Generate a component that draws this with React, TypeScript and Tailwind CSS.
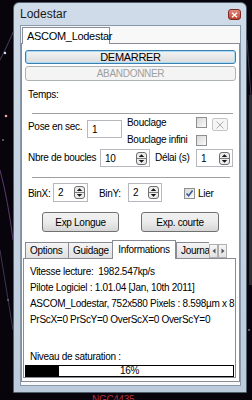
import React from 'react';

const Spin = () => (
	<svg width="11" height="13" viewBox="0 0 11 13" className="shrink-0">
		<rect x="0.5" y="0.5" width="10" height="12" rx="2.5" fill="#ececec" stroke="#6f6f6f" />
		<line x1="1" y1="6.5" x2="10" y2="6.5" stroke="#7a7a7a" />
		<path d="M2.8 5 L5.5 2.3 L8.2 5 Z" fill="#151515" />
		<path d="M2.8 8 L5.5 10.7 L8.2 8 Z" fill="#151515" />
	</svg>
);

const NumBox = ({ value, className }: { value: string; className: string }) => (
	<div
		className={`${className} border border-[#b5b8bd] bg-white flex items-center justify-between pl-[4px] pr-[2px]`}
	>
		<span>{value}</span>
		<Spin />
	</div>
);

const Check = ({ checked, className }: { checked?: boolean; className: string }) => (
	<div
		className={`${className} w-[11px] h-[11px] border border-[#8e8f8f] bg-gradient-to-br from-[#d8d8d8] to-[#fbfbfb] flex items-center justify-center`}
	>
		{checked && (
			<svg width="9" height="9" viewBox="0 0 9 9">
				<path d="M1.5 4.5 L3.6 6.8 L7.6 1.6" fill="none" stroke="#3c5a9a" strokeWidth="1.6" />
			</svg>
		)}
	</div>
);

const Sep = ({ className }: { className: string }) => (
	<div className={`${className} border-t border-[#a0a0a0] border-b border-b-white h-[2px]`} />
);

const Tab = ({ label, w, selected }: { label: string; w: string; selected?: boolean }) =>
	selected ? (
		<div
			className={`${w} h-[19px] -mb-px relative z-10 bg-white border border-b-0 border-[#898c95] flex items-center justify-center pb-[2px]`}
		>
			{label}
		</div>
	) : (
		<div
			className={`${w} h-[16px] border border-b-0 border-r-0 border-[#898c95] bg-gradient-to-b from-[#f4f4f4] to-[#e1e1e1] flex items-center pl-[4px] overflow-hidden`}
		>
			{label}
		</div>
	);

const Arrow = ({ dir }: { dir: 'l' | 'r' }) => (
	<div className="w-[9px] h-[14px] border border-[#b0b0b0] bg-gradient-to-b from-[#f6f6f6] to-[#e3e3e3] flex items-center justify-center">
		<svg width="4" height="6" viewBox="0 0 4 6">
			{dir === 'l' ? <path d="M3.5 0.5 L0.5 3 L3.5 5.5 Z" fill="#555" /> : <path d="M0.5 0.5 L3.5 3 L0.5 5.5 Z" fill="#555" />}
		</svg>
	</div>
);

const App = () => {
	return (
		<div className="w-[252px] h-[400px] bg-[#07050b] relative overflow-hidden font-['Liberation_Sans',Arial,sans-serif] text-[10px] tracking-[-0.3px] leading-[13px] text-black whitespace-nowrap">
			<svg className="absolute inset-0" width="252" height="400" viewBox="0 0 252 400">
				<path d="M0 60 Q10 40 14 30" stroke="#4a3f5a" fill="none" />
				<path d="M0 170 Q8 200 13 240" stroke="#5a3b6e" fill="none" />
				<path d="M0 250 L13 330" stroke="#3e3550" fill="none" />
				<path d="M247 40 L252 110" stroke="#3c3448" fill="none" />
				<circle cx="5" cy="53" r="1.2" fill="#d8e0ff" />
				<circle cx="6" cy="116" r="1.3" fill="#e8a0a0" />
				<circle cx="3" cy="140" r="0.8" fill="#b0b8d0" />
				<circle cx="8" cy="300" r="0.8" fill="#a0a0b8" />
				<circle cx="249" cy="330" r="0.8" fill="#c0c0d0" />
				<rect x="249" y="95" width="3" height="190" fill="#2c2c34" />
			</svg>
			<div className="absolute left-[92px] top-[395px] text-[10px] leading-[10px] text-[#b03040]">
				NGC4435
			</div>

			<div className="relative ml-[13px] mt-[2px] w-[234px] h-[391px] border border-[#52606e] rounded-t-[6px] bg-gradient-to-b from-[#cfdbe8] to-[#bccbdb] flex flex-col pl-[6px] pr-[5px] pb-[6px]">
				<header className="h-[22px] flex items-center justify-between">
					<span className="text-[12px] tracking-normal text-[#1b1b1b] pt-[1px]">Lodestar</span>
					<div className="w-[13px] h-[11px] mt-[1px] rounded-[3px] border border-[#7a2a22] bg-gradient-to-b from-[#e08a7c] to-[#c2402f] flex items-center justify-center">
						<svg width="7" height="6" viewBox="0 0 7 6">
							<path d="M1 0.8 L6 5.2 M6 0.8 L1 5.2" stroke="white" strokeWidth="1.4" />
						</svg>
					</div>
				</header>

				<div className="flex-1 border border-[#8798ab] bg-[#f8f8f8] flex flex-col pb-[3px]">
					<div className="flex items-end h-[17px] pl-[1px]">
						<div className="w-[88px] h-[17px] -mb-px relative z-10 bg-white border border-b-0 border-[#898c95] flex items-center pl-[4px] text-[11px]">
							ASCOM_Lodestar
						</div>
					</div>

					<section className="flex-1 border border-[#898c95] bg-white flex flex-col pb-[3px]">
						<button className="mt-[6px] mx-[3px] h-[14px] rounded-[3px] border border-[#3c7fb1] bg-gradient-to-b from-[#f4f4f4] to-[#dcdcdc] shadow-[inset_0_0_0_1px_#a8dcf4] flex items-center justify-center text-[11px]">
							DEMARRER
						</button>
						<button className="mt-[2px] mx-[3px] h-[15px] rounded-[3px] border border-[#adb2b5] bg-[#f4f4f4] text-[#a0a0a0] flex items-center justify-center">
							ABANDONNER
						</button>
						<p className="mt-[7px] pl-[6px]">Temps:</p>
						<Sep className="mt-[12px] ml-[10px] mr-[6px]" />

						<div className="mt-[1px] h-[32px] flex items-start">
							<span className="ml-[6px] mt-[4px] w-[59px]">Pose en sec.</span>
							<div className="mt-[4px] w-[35px] h-[18px] border border-[#b5b8bd] bg-white flex items-center pl-[4px]">
								1
							</div>
							<div className="ml-[5px] w-[69px] flex flex-col">
								<span>Bouclage</span>
								<span className="mt-[4px]">Bouclage infini</span>
							</div>
							<div className="flex flex-col">
								<Check className="mt-[1px]" />
								<Check className="mt-[7px]" />
							</div>
							<div className="ml-[5px] mt-[2px] w-[16px] h-[13px] rounded-[2px] border border-[#c4c4c4] bg-[#f6f6f6] flex items-center justify-center">
								<svg width="8" height="8" viewBox="0 0 8 8">
									<path d="M0.5 0.5 L7.5 7.5 M7.5 0.5 L0.5 7.5" stroke="#a8a8a8" strokeWidth="0.9" />
								</svg>
							</div>
						</div>

						<div className="h-[19px] flex items-start">
							<span className="ml-[6px] mt-[3px] w-[72px]">Nbre de boucles</span>
							<NumBox value="10" className="mt-[1px] w-[50px] h-[18px]" />
							<span className="ml-[5px] mt-[3px] w-[41px]">Délai (s)</span>
							<NumBox value="1" className="mt-[1px] w-[37px] h-[18px]" />
						</div>

						<Sep className="mt-[10px] ml-[10px] mr-[9px]" />

						<div className="h-[23px] flex items-start">
							<span className="ml-[6px] mt-[8px] w-[25px]">BinX:</span>
							<NumBox value="2" className="mt-[4px] w-[35px] h-[19px]" />
							<span className="ml-[11px] mt-[8px] w-[29px]">BinY:</span>
							<NumBox value="2" className="mt-[4px] w-[34px] h-[19px]" />
							<Check checked className="ml-[22px] mt-[9px]" />
							<span className="ml-[3px] mt-[8px]">Lier</span>
						</div>

						<div className="mt-[10px] flex">
							<button className="ml-[20px] w-[77px] h-[20px] rounded-[3px] border border-[#707070] bg-gradient-to-b from-[#f2f2f2] via-[#ebebeb] to-[#d6d6d6] flex items-center justify-center">
								Exp Longue
							</button>
							<button className="ml-[22px] w-[78px] h-[20px] rounded-[3px] border border-[#707070] bg-gradient-to-b from-[#f2f2f2] via-[#ebebeb] to-[#d6d6d6] flex items-center justify-center">
								Exp. courte
							</button>
						</div>

						<div className="mt-[8px] ml-[1px] mr-[3px] flex-1 flex flex-col">
							<div className="flex items-end h-[18px] pl-[2px]">
								<Tab label="Options" w="w-[43px]" />
								<Tab label="Guidage" w="w-[44px]" />
								<Tab label="Informations" w="w-[64px]" selected />
								<Tab label="Journal" w="w-[33px]" />
								<Arrow dir="l" />
								<Arrow dir="r" />
							</div>
							<div className="flex-1 border border-[#898c95] bg-white flex flex-col pt-[5px] pl-[6px] pr-[1px] leading-[16px] overflow-hidden">
								<p>Vitesse lecture:&nbsp; 1982.547kp/s</p>
								<p>Pilote Logiciel : 1.01.04 [Jan, 10th 2011]</p>
								<p>ASCOM_Lodestar, 752x580 Pixels : 8.598µm x 8.598µm</p>
								<p>PrScX=0 PrScY=0 OverScX=0 OverScY=0</p>
								<p className="mt-[21px]">Niveau de saturation :</p>
								<div className="-ml-[5px] h-[12px] border border-black bg-white relative flex items-center justify-center leading-[10px]">
									<div className="absolute left-0 top-0 bottom-0 w-[16%] bg-black" />
									<span className="relative">16%</span>
								</div>
							</div>
						</div>
					</section>
				</div>
			</div>
		</div>
	);
};

export default App;
